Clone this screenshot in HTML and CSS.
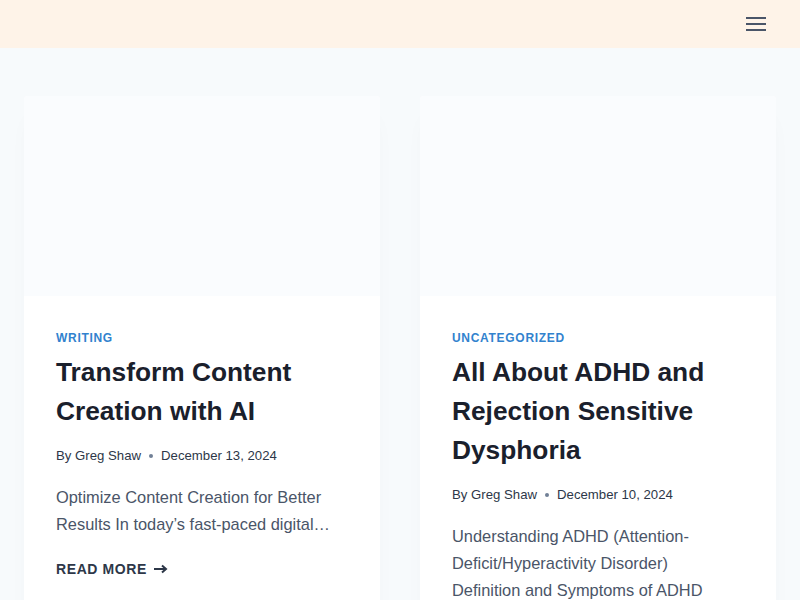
FILE: index.html
```html
<!DOCTYPE html>
<html lang="en">
<head>
    <meta charset="UTF-8">
    <meta name="viewport" content="width=device-width, initial-scale=1.0">
    <title>Blog</title>
    <link rel="stylesheet" href="styles.css">
</head>
<body>
    <header class="site-header">
        <button class="menu-toggle" aria-label="Open menu">
            <svg width="20" height="14" viewBox="0 0 20 14">
                <rect x="0" y="0" width="20" height="2" fill="#4a5568"/>
                <rect x="0" y="6" width="20" height="2" fill="#4a5568"/>
                <rect x="0" y="12" width="20" height="2" fill="#4a5568"/>
            </svg>
        </button>
    </header>

    <main class="content">
        <div class="posts">
            <article class="post-card">
                <div class="post-thumb"></div>
                <div class="post-body">
                    <p class="post-cat">Writing</p>
                    <h2 class="post-title">Transform Content Creation with AI</h2>
                    <p class="post-meta">By Greg Shaw <span class="dot"></span> December 13, 2024</p>
                    <p class="post-excerpt">Optimize Content Creation for Better Results In today’s fast-paced digital…</p>
                    <a class="read-more" href="#">Read More
                        <svg width="14" height="10" viewBox="0 0 14 10"><path d="M0 5h12M8 1.5L12 5 8 8.5" fill="none" stroke="#2d3748" stroke-width="2"/></svg>
                    </a>
                </div>
            </article>

            <article class="post-card">
                <div class="post-thumb"></div>
                <div class="post-body">
                    <p class="post-cat">Uncategorized</p>
                    <h2 class="post-title">All About ADHD and Rejection Sensitive Dysphoria</h2>
                    <p class="post-meta">By Greg Shaw <span class="dot"></span> December 10, 2024</p>
                    <p class="post-excerpt">Understanding ADHD (Attention-Deficit/Hyperactivity Disorder)<br>
                        Definition and Symptoms of ADHD<br>
                        ADHD is a neurodevelopmental disorder…</p>
                    <a class="read-more" href="#">Read More
                        <svg width="14" height="10" viewBox="0 0 14 10"><path d="M0 5h12M8 1.5L12 5 8 8.5" fill="none" stroke="#2d3748" stroke-width="2"/></svg>
                    </a>
                </div>
            </article>
        </div>
    </main>
</body>
</html>
```

FILE: styles.css
```css
* {
    margin: 0;
    padding: 0;
    box-sizing: border-box;
}

body {
    font-family: "Liberation Sans", Arial, sans-serif;
    background-color: #f7fafc;
    color: #4a5568;
}

.site-header {
    height: 48px;
    background-color: #fef3e8;
    display: flex;
    align-items: center;
    justify-content: flex-end;
    padding-right: 34px;
}

.menu-toggle {
    background: none;
    border: none;
    display: flex;
    cursor: pointer;
}

.content {
    padding: 48px 24px;
}

.posts {
    display: grid;
    grid-template-columns: 1fr 1fr;
    gap: 40px;
    align-items: start;
}

.post-card {
    background-color: #fff;
    border-radius: 4px;
    overflow: hidden;
    box-shadow: 0 15px 25px -10px rgba(0, 0, 0, 0.05);
}

.post-thumb {
    height: 200px;
    background-color: #fafcfe;
}

.post-body {
    padding: 33px 32px 40px;
}

.post-cat {
    font-size: 12px;
    line-height: 18px;
    font-weight: bold;
    letter-spacing: 0.7px;
    text-transform: uppercase;
    color: #3182ce;
}

.post-title {
    margin-top: 6px;
    font-size: 26.3px;
    line-height: 39px;
    font-weight: bold;
    color: #1a202c;
}

.post-meta {
    margin-top: 14px;
    font-size: 13.2px;
    line-height: 21px;
    color: #2d3748;
    display: flex;
    align-items: center;
    gap: 8px;
}

.dot {
    width: 4px;
    height: 4px;
    border-radius: 50%;
    background-color: #718096;
}

.post-excerpt {
    margin-top: 18px;
    font-size: 16.4px;
    line-height: 27px;
    color: #4a5568;
}

.read-more {
    display: inline-flex;
    align-items: center;
    gap: 7px;
    margin-top: 21px;
    font-size: 14px;
    line-height: 20px;
    font-weight: bold;
    letter-spacing: 0.6px;
    text-transform: uppercase;
    text-decoration: none;
    color: #2d3748;
}
```
